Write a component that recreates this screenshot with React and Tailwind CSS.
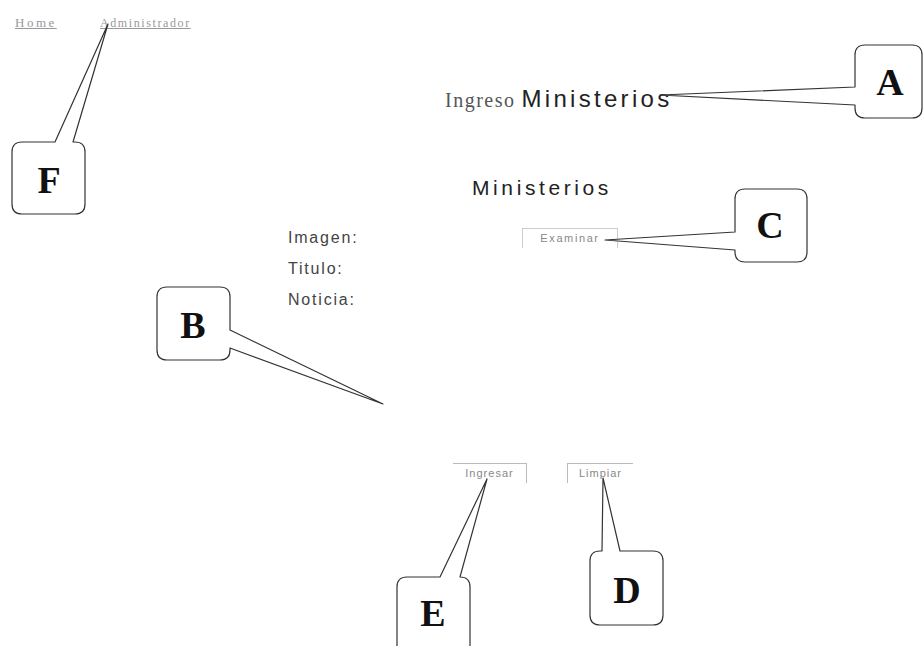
import React from "react";

const serif = { fontFamily: '"Liberation Serif", "Times New Roman", serif' };

function Callouts() {
  const stroke = "#333";
  const shapes = [
    // A
    "M 865 45 H 912 Q 922 45 922 55 V 108 Q 922 118 912 118 H 865 Q 855 118 855 108 V 105 L 660 95 L 855 87 V 55 Q 855 45 865 45 Z",
    // F
    "M 22 142 H 55 L 108 24 L 73 142 H 75 Q 85 142 85 152 V 204 Q 85 214 75 214 H 22 Q 12 214 12 204 V 152 Q 12 142 22 142 Z",
    // C
    "M 745 189 H 797 Q 807 189 807 199 V 252 Q 807 262 797 262 H 745 Q 735 262 735 252 V 250 L 605 240 L 735 232 V 199 Q 735 189 745 189 Z",
    // B
    "M 167 287 H 220 Q 230 287 230 297 V 330 L 383 404 L 230 348 V 350 Q 230 360 220 360 H 167 Q 157 360 157 350 V 297 Q 157 287 167 287 Z",
    // E
    "M 407 577 H 440 L 487 479 L 460 577 Q 470 577 470 587 V 650 H 397 V 587 Q 397 577 407 577 Z",
    // D
    "M 600 551 H 602 L 603 478 L 620 551 H 653 Q 663 551 663 561 V 615 Q 663 625 653 625 H 600 Q 590 625 590 615 V 561 Q 590 551 600 551 Z",
  ];
  const letters = [
    ["A", 890, 82],
    ["F", 49, 180],
    ["C", 770, 225],
    ["B", 193, 325],
    ["E", 433, 613],
    ["D", 627, 590],
  ];
  return (
    <svg
      className="pointer-events-none absolute left-0 top-0"
      width="924"
      height="646"
      viewBox="0 0 924 646"
    >
      {shapes.map((d, i) => (
        <path key={i} d={d} fill="white" stroke={stroke} strokeWidth="1.2" strokeLinejoin="round" />
      ))}
      {letters.map(([t, x, y]) => (
        <text
          key={t}
          x={x}
          y={y + 13}
          textAnchor="middle"
          fontFamily='"Liberation Serif", "Times New Roman", serif'
          fontWeight="bold"
          fontSize="38"
          fill="#111"
        >
          {t}
        </text>
      ))}
    </svg>
  );
}

export default function App() {
  return (
    <div
      className="relative h-[646px] w-[924px] overflow-hidden bg-white"
      style={{ fontFamily: '"Liberation Sans", Arial, sans-serif' }}
    >
      <div className="pl-[15px] pt-[15px]">
        <nav className="flex h-[16px] items-center leading-[16px] text-[#999]" style={serif}>
          <span className="w-[85px] text-[13px] tracking-[2.5px] underline">Home</span>
          <span className="text-[12px] tracking-[1.6px] underline">Administrador</span>
        </nav>
      </div>

      <div className="mt-[50px] flex h-[28px] items-baseline pl-[445px]">
        <span className="text-[20px] tracking-[1.5px] text-[#555]" style={serif}>
          Ingreso
        </span>
        <span className="ml-[6px] text-[24px] tracking-[3.3px] text-[#222]">Ministerios</span>
      </div>

      <div className="mt-[67px] flex h-[24px] items-center pl-[472px]">
        <h2 className="text-[21px] tracking-[3.6px] text-[#222]">Ministerios</h2>
      </div>

      <div className="mt-[22px] flex flex-col pl-[288px] text-[16px] tracking-[1.8px] text-[#444]">
        <div className="flex h-[31px] items-center">
          <span className="w-[234px]">Imagen:</span>
          <button className="flex h-[20px] w-[96px] items-center justify-center border-l border-r border-t border-[#ccc] text-[11px] tracking-[1.6px] text-[#888]">
            Examinar
          </button>
        </div>
        <div className="flex h-[31px] items-center">Titulo:</div>
        <div className="flex h-[31px] items-center">Noticia:</div>
      </div>

      <div className="mt-[147px] flex h-[22px] items-center pl-[453px]">
        <button className="flex h-[20px] w-[74px] items-center justify-center border-r border-t border-[#bbb] text-[11px] tracking-[1px] text-[#888]">
          Ingresar
        </button>
        <button className="ml-[40px] flex h-[20px] w-[66px] items-center justify-center border-l border-t border-[#bbb] text-[11px] tracking-[1px] text-[#888]">
          Limpiar
        </button>
      </div>

      <Callouts />
    </div>
  );
}
